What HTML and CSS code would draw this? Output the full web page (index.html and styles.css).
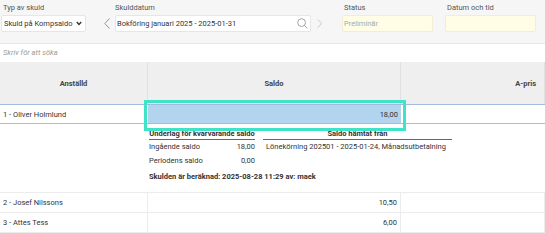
FILE: index.html
```html
<!DOCTYPE html>
<html lang="sv">
<head>
    <meta charset="UTF-8">
    <meta name="viewport" content="width=device-width, initial-scale=1.0">
    <title>Skulder</title>
    <link rel="stylesheet" href="styles.css">
</head>
<body>
    <div class="toolbar">
        <div class="field field-type">
            <span class="label">Typ av skuld</span>
            <div class="box select">
                <span>Skuld på Kompsaldo</span>
                <svg width="6" height="5" viewBox="0 0 6 5"><polyline points="0.8,1 3,3.4 5.2,1" fill="none" stroke="#333" stroke-width="1.4"/></svg>
            </div>
        </div>
        <div class="nav nav-prev">
            <svg width="6" height="11" viewBox="0 0 6 11"><polyline points="5.5,0.5 0.8,5.5 5.5,10.5" fill="none" stroke="#8a8a8a" stroke-width="0.9"/></svg>
        </div>
        <div class="field field-date">
            <span class="label">Skulddatum</span>
            <div class="box date">
                <span>Bokföring januari 2025 - 2025-01-31</span>
                <svg width="11" height="11" viewBox="0 0 11 11"><circle cx="4.6" cy="4.6" r="3.9" fill="none" stroke="#9a9a9a" stroke-width="0.9"/><line x1="7.4" y1="7.4" x2="10.4" y2="10.4" stroke="#9a9a9a" stroke-width="0.9"/></svg>
            </div>
        </div>
        <div class="nav nav-next">
            <svg width="6" height="9" viewBox="0 0 6 9"><polyline points="0.6,0.5 4.8,4.5 0.6,8.5" fill="none" stroke="#c4c4c4" stroke-width="0.9"/></svg>
        </div>
        <div class="field field-status">
            <span class="label">Status</span>
            <div class="box readonly placeholder">Preliminär</div>
        </div>
        <div class="field field-time">
            <span class="label">Datum och tid</span>
            <div class="box readonly"></div>
        </div>
    </div>

    <div class="search">Skriv för att söka</div>

    <div class="grid">
        <div class="row head">
            <div class="cell center">Anställd</div>
            <div class="cell center">Saldo</div>
            <div class="cell right">A-pris</div>
        </div>

        <div class="row selected">
            <div class="cell">1 - Oliver Holmlund</div>
            <div class="cell right active">
                18,00
                <div class="focus"></div>
            </div>
            <div class="cell"></div>
        </div>

        <div class="detail">
            <div class="detail-cols">
                <div class="block block-left">
                    <div class="block-head">Underlag för kvarvarande saldo</div>
                    <div class="pair"><span>Ingående saldo</span><span>18,00</span></div>
                    <div class="pair"><span>Periodens saldo</span><span>0,00</span></div>
                </div>
                <div class="block block-right">
                    <div class="block-head">Saldo hämtat från</div>
                    <div class="pair">Lönekörning 202501 - 2025-01-24, Månadsutbetalning</div>
                </div>
            </div>
            <div class="calc">Skulden är beräknad: 2025-08-28 11:29 av: maek</div>
        </div>

        <div class="row">
            <div class="cell">2 - Josef Nilssons</div>
            <div class="cell right">10,50</div>
            <div class="cell"></div>
        </div>
        <div class="row">
            <div class="cell">3 - Attes Tess</div>
            <div class="cell right">6,00</div>
            <div class="cell"></div>
        </div>
    </div>
</body>
</html>
```

FILE: styles.css
```css
body {
    margin: 0;
    font-family: Roboto, "Liberation Sans", sans-serif;
    font-size: 7.5px;
    color: #333;
    background-color: #ffffff;
    white-space: nowrap;
}

.toolbar {
    display: flex;
    align-items: flex-end;
    height: 44px;
    box-sizing: border-box;
    padding: 3px 0 11px 1px;
    background-color: #f6f6f6;
    border-bottom: 1px solid #e7e7e7;
}

.field {
    display: flex;
    flex-direction: column;
    gap: 2px;
}

.label {
    line-height: 10px;
    color: #555;
    padding-left: 2px;
}

.box {
    height: 17px;
    box-sizing: border-box;
    display: flex;
    align-items: center;
    justify-content: space-between;
    background-color: #ffffff;
    border: 1px solid #e6e6e6;
    border-radius: 2px;
}

.field-type { width: 85px; }
.field-date { width: 196px; }
.field-date .label { margin-left: -2px; }
.field-status { width: 91px; margin-left: 19px; }
.field-time { width: 91px; margin-left: 12px; }

.select { padding: 0 3px 0 2px; }
.date { padding: 0 2px 0 1px; }

.readonly {
    background-color: #fffde6;
    border-color: #efeed9;
    padding-left: 1px;
}

.placeholder { color: #a8a8a8; }

.nav {
    height: 17px;
    display: flex;
    align-items: center;
}

.nav-prev {
    width: 29px;
    justify-content: flex-end;
    padding-right: 5px;
    box-sizing: border-box;
}

.nav-next {
    width: 12px;
    padding-left: 6px;
    box-sizing: border-box;
}

.search {
    height: 18px;
    line-height: 18px;
    padding-left: 3px;
    font-style: italic;
    color: #9a9a9a;
}

.row {
    display: grid;
    grid-template-columns: 148px 253px 1fr;
    border-bottom: 1px solid #ececec;
}

.cell {
    height: 19px;
    display: flex;
    align-items: center;
    padding: 0 3px;
    box-sizing: border-box;
    border-right: 1px solid #ececec;
}

.cell.center { justify-content: center; }
.cell.right { justify-content: flex-end; }

.head {
    background-color: #efefef;
    border-bottom: none;
}

.head .cell {
    height: 42px;
    font-weight: bold;
    color: #444;
    border-right-color: #e1e1e1;
}

.head .cell.right { padding-right: 8px; }

.selected {
    border-top: 1px solid #a3bcdd;
    border-bottom: 1px solid #a3bcdd;
}

.selected .cell {
    height: 18px;
    border-right: none;
}

.active {
    position: relative;
    background-color: #b3d4ef;
}

.focus {
    position: absolute;
    top: -5px;
    left: -4px;
    width: 262px;
    height: 31px;
    box-sizing: border-box;
    border: 3px solid #3fe3c7;
}

.detail {
    padding: 5px 0 10px 149px;
    border-bottom: 1px solid #ececec;
}

.detail-cols {
    display: flex;
    gap: 8px;
}

.block-left { width: 106px; }
.block-right { width: 189px; }

.block-head {
    line-height: 10px;
    font-weight: bold;
    text-align: center;
    border-bottom: 1px solid #666;
}

.pair {
    line-height: 14px;
    display: flex;
    justify-content: space-between;
}

.block-right .pair { padding-left: 3px; }

.calc {
    margin-top: 4px;
    line-height: 10px;
    font-weight: bold;
}
```
